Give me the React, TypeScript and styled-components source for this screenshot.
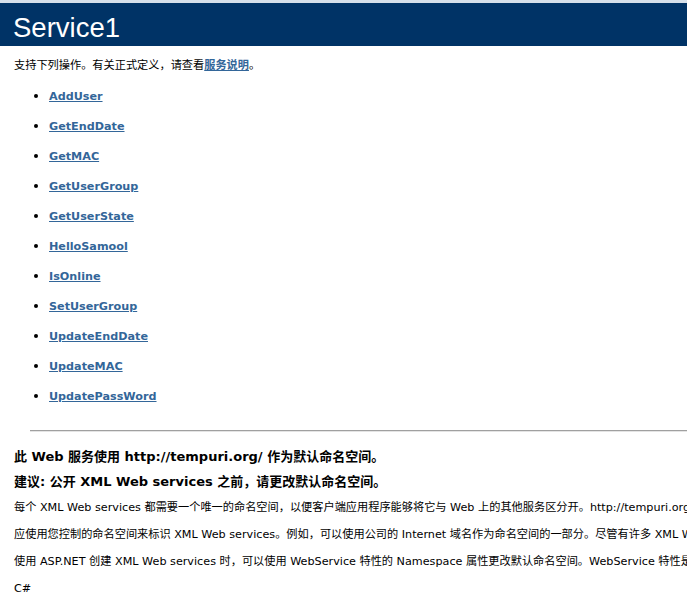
import React from "react";
import styled, { createGlobalStyle } from "styled-components";

const Global = createGlobalStyle`
  html, body { margin: 0; padding: 0; background: #ffffff; overflow: hidden; }
  body { font-family: "DejaVu Sans", Verdana, "Noto Sans CJK SC", sans-serif; color: #000; }
`;

const Page = styled.div`
  display: flex;
  flex-direction: column;
  width: 687px;
  overflow: hidden;
`;

const Header = styled.h1`
  margin: 0;
  border-top: 3px solid #d6e0ea;
  background: #003366;
  color: #ffffff;
  font-family: Tahoma, "Liberation Sans", sans-serif;
  font-weight: normal;
  font-size: 27.5px;
  line-height: 50px;
  padding-left: 13px;
  box-sizing: border-box;
  height: 46px;
`;

const Content = styled.div`
  display: flex;
  flex-direction: column;
  padding-left: 14px;
  font-size: 11.2px;
`;

const Intro = styled.p`
  margin: 13px 0 0;
  line-height: 14px;
  white-space: nowrap;
  font-family: "DejaVu Sans", "Noto Sans CJK SC", sans-serif;
`;

const Link = styled.a`
  color: #336699;
  font-weight: bold;
  text-decoration: underline;
`;

const List = styled.ul`
  margin: 15px 0 0;
  padding-left: 35px;
  display: flex;
  flex-direction: column;
  gap: 16px;
  list-style: disc;
`;

const Item = styled.li`
  line-height: 14px;
  height: 14px;
  padding-left: 0;
  &::marker {
    font-size: 14px;
  }
`;

const Rule = styled.div`
  margin: 28px 0 0 16px;
  height: 1px;
  background: #a0a0a0;
  border-bottom: 1px solid #e4e4e4;
`;

const Heading = styled.h3<{ $top: number }>`
  margin: 0;
  font-size: 13px;
  font-weight: bold;
  line-height: 16px;
  white-space: nowrap;
  margin-top: ${(p) => p.$top}px;
  font-family: "DejaVu Sans", "Noto Sans CJK SC", sans-serif;
`;

const Para = styled.p<{ $top: number }>`
  margin: 0;
  margin-top: ${(p) => p.$top}px;
  font-size: 11.2px;
  line-height: 14px;
  white-space: nowrap;
  font-family: "DejaVu Sans", "Noto Sans CJK SC", sans-serif;
`;

const ops = [
  "AddUser",
  "GetEndDate",
  "GetMAC",
  "GetUserGroup",
  "GetUserState",
  "HelloSamool",
  "IsOnline",
  "SetUserGroup",
  "UpdateEndDate",
  "UpdateMAC",
  "UpdatePassWord",
];

export default function App() {
  return (
    <Page>
      <Global />
      <Header>Service1</Header>
      <Content>
        <Intro>
          支持下列操作。有关正式定义，请查看<Link href="#">服务说明</Link>。
        </Intro>
        <List>
          {ops.map((o) => (
            <Item key={o}>
              <Link href="#">{o}</Link>
            </Item>
          ))}
        </List>
        <Rule />
        <Heading $top={17}>此 Web 服务使用 http://tempuri.org/ 作为默认命名空间。</Heading>
        <Heading $top={9}>建议: 公开 XML Web services 之前，请更改默认命名空间。</Heading>
        <Para $top={11}>
          每个 XML Web services 都需要一个唯一的命名空间，以便客户端应用程序能够将它与 Web 上的其他服务区分开。http://tempuri.org/ 可用于正在开发中的 XML Web services，而已发布的 XML Web services 应使用更为永久的命名空间。
        </Para>
        <Para $top={13}>
          应使用您控制的命名空间来标识 XML Web services。例如，可以使用公司的 Internet 域名作为命名空间的一部分。尽管有许多 XML Web services 命名空间看似 URL，但它们不必指向 Web 上的实际资源。
        </Para>
        <Para $top={13}>
          使用 ASP.NET 创建 XML Web services 时，可以使用 WebService 特性的 Namespace 属性更改默认命名空间。WebService 特性是一个应用于包含 XML Web services 方法的类的特性。
        </Para>
        <Para $top={13}>C#</Para>
      </Content>
    </Page>
  );
}
